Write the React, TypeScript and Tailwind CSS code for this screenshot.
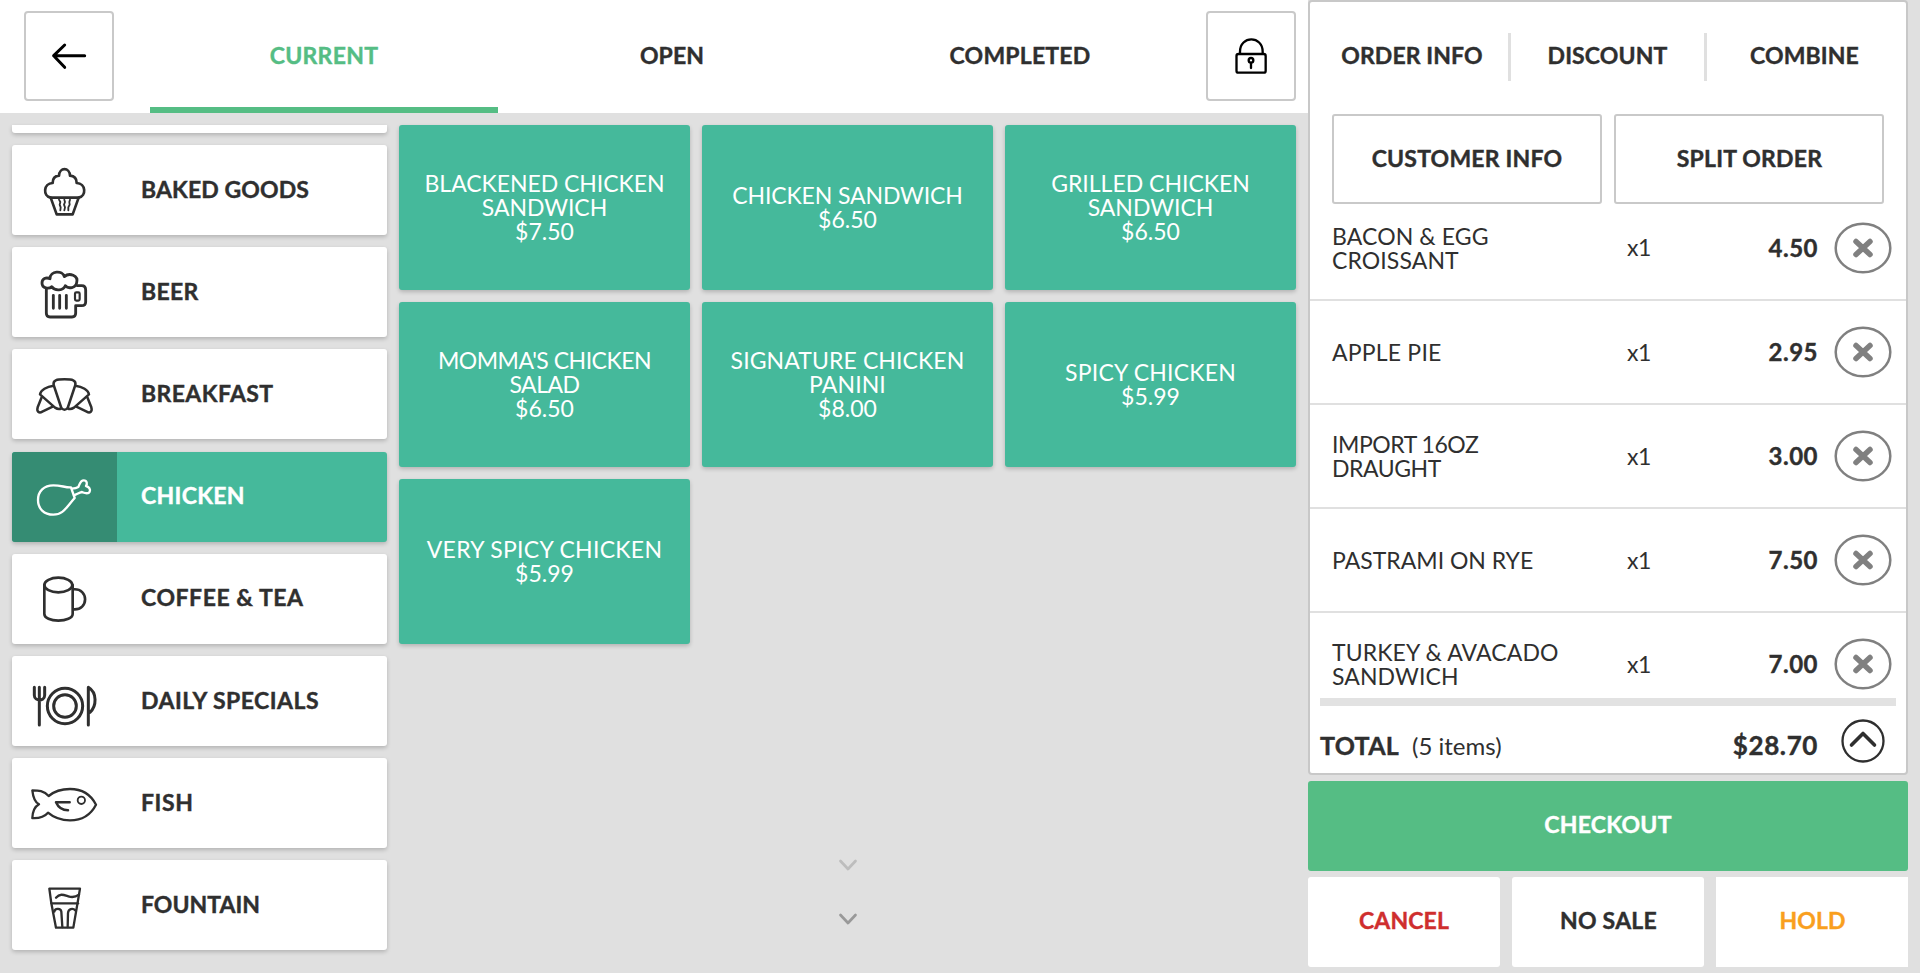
import type { ReactNode } from "react";

const BakedGoods = (
  <g strokeWidth="8">
    <path d="M152 203C128 198 130 160 158 159C158 146 165 138 177 137C178 111 209 111 210 137C222 138 230 146 230 159C258 160 260 198 236 203Z" />
    <path d="M152 203L170 253H218L236 203" />
    <path strokeWidth="5.500" d="M177 209l4 7-2 8 3 8-1 9M193 209l2 7-3 8 3 8-2 9M210 209l-2 7 1 8-4 8v9" />
  </g>
);

const Beer = (
  <g strokeWidth="8.500">
    <path d="M155 470C148 477 126 477 126 459C126 446 138 441 150 446C150 422 188 420 193 440C208 427 236 436 230 458C228 474 205 478 196 467C190 482 165 484 155 470Z" />
    <path d="M139 476V550Q139 561 150 561H216Q227 561 227 550V527H245Q257 527 257 515V480Q257 467 245 467H232" />
    <rect x="225" y="487" width="14" height="25" rx="4" strokeWidth="6.500" />
    <path strokeWidth="8.500" d="M160 496V535M179 496V535M199 496V535" />
  </g>
);

const Breakfast = (
  <g strokeWidth="7.500">
    <path d="M161 765C158 750 170 748 193.500 748C217 748 229 750 226 765L203 834Q193.500 844 184 834Z" />
    <path d="M161 767C140 770 122 780 120 793L165 833Q176 840 184 835M226 767C247 770 265 780 267 793L222 833Q211 840 203 835" />
    <path d="M125 802L113 832C109 846 118 850 127 845L158 830M262 802L274 832C278 846 269 850 260 845L229 830" />
  </g>
);

const Chicken = (
  <g strokeWidth="7">
    <path d="M213 140C195 141 185 134 160 134C132 134 114 152 114 178C114 204 132 222 160 222C190 222 197 202 224 172Z" />
    <path d="M216 144Q228 143 235 139C240 128 241 119 251 119C262 119 262 130 258 136C268 138 272 147 269 153C265 162 250 156 246 154C238 156 232 160 222 164" />
  </g>
);

const Coffee = (
  <g strokeWidth="8">
    <ellipse cx="175" cy="434" rx="42" ry="22" />
    <path d="M133 434V521C133 533 152 541 175 541C198 541 218 533 218 521V434" />
    <path d="M220 447C267 443 267 511 220 507" />
  </g>
);

const DailySpecials = (
  <g strokeWidth="9">
    <circle cx="195" cy="797" r="53" />
    <circle cx="195" cy="797" r="34" />
    <path d="M103 741V765C103 775 112 779 118 779C125 779 134 775 134 765V741M118 741V854" />
    <path d="M265 854V741C292 757 290 798 270 816" />
  </g>
);

const Fish = (
  <g strokeWidth="7">
    <path d="M146 168C165 152 188 147 210 147C245 147 272 163 288 194C272 225 245 241 210 241C188 241 165 236 144 218C132 232 115 235 97 234C98 215 104 200 117 193C104 186 99 170 97 151C115 151 132 152 146 168Z" />
    <path d="M209 187H168C175 203 188 211 204 211" strokeWidth="7.500" />
    <circle cx="244" cy="181" r="11" strokeWidth="5.500" />
  </g>
);

const Fountain = (
  <g strokeWidth="7">
    <path d="M148 447H240L220 564H168L154 491Z" />
    <path d="M155 491H234" />
    <path d="M168 474C180 460 192 466 205 470C217 474 230 470 237 465" />
    <path d="M163 516C164 506 182 504 184 516L187 562M226 512C218 504 205 508 204 520L203 562" />
  </g>
);

type Category = { name: string; view: string; icon: ReactNode; spacing: string; active?: boolean };

const categories: Category[] = [
  { name: "BAKED GOODS", view: "36 45 315 270", icon: BakedGoods, spacing: "tracking-[0.1px]" },
  { name: "BEER", view: "36 351 315 270", icon: Beer, spacing: "tracking-[0.3px]" },
  { name: "BREAKFAST", view: "36 657 315 270", icon: Breakfast, spacing: "tracking-[0.4px]" },
  { name: "CHICKEN", view: "36 34 315 270", icon: Chicken, spacing: "tracking-[0.3px]", active: true },
  { name: "COFFEE & TEA", view: "36 341 315 270", icon: Coffee, spacing: "tracking-[0.55px]" },
  { name: "DAILY SPECIALS", view: "36 647 315 270", icon: DailySpecials, spacing: "tracking-[0.48px]" },
  { name: "FISH", view: "36 54 315 270", icon: Fish, spacing: "tracking-[0.6px]" },
  { name: "FOUNTAIN", view: "36 361 315 270", icon: Fountain, spacing: "tracking-[0px]" },
];

const products = [
  { lines: ["BLACKENED CHICKEN", "SANDWICH"], price: "$7.50", spacing: "tracking-[-0.05px]" },
  { lines: ["CHICKEN SANDWICH"], price: "$6.50", spacing: "tracking-[-0.12px]" },
  { lines: ["GRILLED CHICKEN", "SANDWICH"], price: "$6.50", spacing: "tracking-[0px]" },
  { lines: ["MOMMA'S CHICKEN", "SALAD"], price: "$6.50", spacing: "tracking-[-0.5px]" },
  { lines: ["SIGNATURE CHICKEN", "PANINI"], price: "$8.00", spacing: "tracking-[0.1px]" },
  { lines: ["SPICY CHICKEN"], price: "$5.99", spacing: "tracking-[0.2px]" },
  { lines: ["VERY SPICY CHICKEN"], price: "$5.99", spacing: "tracking-[0.3px]" },
];

const items = [
  { lines: ["BACON & EGG", "CROISSANT"], price: "4.50", spacing: "tracking-[0.1px]" },
  { lines: ["APPLE PIE"], price: "2.95", spacing: "tracking-[0.2px]" },
  { lines: ["IMPORT 16OZ", "DRAUGHT"], price: "3.00", spacing: "tracking-[-0.45px]" },
  { lines: ["PASTRAMI ON RYE"], price: "7.50", spacing: "tracking-[0px]" },
  { lines: ["TURKEY & AVACADO", "SANDWICH"], price: "7.00", spacing: "tracking-[0.1px]" },
];

function Chevron({ className }: { className: string }) {
  return (
    <svg viewBox="0 0 20 12" className={`h-3 w-5 fill-none ${className}`} strokeWidth="2.7" strokeLinecap="round" strokeLinejoin="round">
      <path d="M2.500 2L10 10L17.500 2" />
    </svg>
  );
}

function Header() {
  return (
    <header className="flex h-[113px] shrink-0 bg-white pl-6 pr-3">
      <button className="mt-[11px] size-[90px] shrink-0 rounded border-2 border-[#c9c9c9]">
        <svg viewBox="18 21 258 258" className="size-full fill-none stroke-black" strokeWidth="9" strokeLinecap="round" strokeLinejoin="round">
          <path d="M194 149H101M134 117L101 149L134 184" />
        </svg>
      </button>
      <nav className="ml-9 grid w-[1044px] grid-cols-3">
        <button className="border-b-6 border-[#55bd84] pt-1 tracking-[0.3px] text-[#55bd84]">CURRENT</button>
        <button className="border-b-6 border-transparent pt-1">OPEN</button>
        <button className="border-b-6 border-transparent pt-1 tracking-[0.2px]">COMPLETED</button>
      </nav>
      <button className="ml-3 mt-[11px] size-[90px] shrink-0 rounded border-2 border-[#c9c9c9]">
        <svg viewBox="12 21 258 258" className="size-full fill-none stroke-black" strokeWidth="7" strokeLinecap="round">
          <rect x="97.500" y="144" width="87.500" height="56" rx="6" />
          <path d="M108 143V137C108 88 176 88 176 137V143" />
          <circle cx="141" cy="163" r="7" />
          <path d="M141 171V186" />
        </svg>
      </button>
    </header>
  );
}

function Sidebar() {
  return (
    <aside className="flex w-[375px] shrink-0 flex-col gap-[12.15px]">
      <div className="h-2 shrink-0 rounded-b-[3px] bg-white shadow-[0_2px_4px_rgba(0,0,0,0.2)]" />
      {categories.map((c) => (
        <button
          key={c.name}
          className={`flex h-[90px] shrink-0 items-center overflow-hidden rounded-[3px] text-left shadow-[0_2px_4px_rgba(0,0,0,0.2)] ${
            c.active ? "bg-[#45b99b] text-white" : "bg-white"
          }`}
        >
          <span className={`h-full w-[105px] ${c.active ? "bg-[#358c73]" : ""}`}>
            <svg
              viewBox={c.view}
              className={`size-full fill-none ${c.active ? "stroke-white" : "stroke-[#2f2f2f]"}`}
              strokeLinecap="round"
              strokeLinejoin="round"
            >
              {c.icon}
            </svg>
          </span>
          <span className={`pb-0.5 pl-6 ${c.spacing}`}>{c.name}</span>
        </button>
      ))}
    </aside>
  );
}

function Products() {
  return (
    <section className="flex flex-1 flex-col items-center justify-between">
      <div className="grid w-full grid-cols-3 gap-x-3 gap-y-[12.2px]">
        {products.map((p) => (
          <button
            key={p.lines[0]}
            className={`flex h-[165px] flex-col items-center justify-center rounded-[3px] bg-[#45b99b] pb-0.5 font-normal leading-6 text-white shadow-[0_2px_4px_rgba(0,0,0,0.2)] [-webkit-text-stroke:0] ${p.spacing}`}
          >
            {p.lines.map((l) => (
              <span key={l}>{l}</span>
            ))}
            <span className="tracking-[0px]">{p.price}</span>
          </button>
        ))}
      </div>
      <div className="flex flex-col gap-[42px] pb-12 pl-px">
        <Chevron className="stroke-[#bdbdbd]" />
        <Chevron className="stroke-[#999999]" />
      </div>
    </section>
  );
}

function OrderRow({ lines, price, spacing }: { lines: string[]; price: string; spacing: string }) {
  return (
    <li className="flex h-[104.2px] shrink-0 items-center border-b-2 border-[#e0e0e0] pl-[22px]">
      <div className={`w-[295px] font-normal leading-6 [-webkit-text-stroke:0] ${spacing}`}>
        {lines.map((l) => (
          <div key={l}>{l}</div>
        ))}
      </div>
      <div className="w-[70px] font-normal tracking-[-0.4px] [-webkit-text-stroke:0]">x1</div>
      <div className="w-[121px] text-right text-[24px] tracking-[0.5px]">{price}</div>
      <svg viewBox="0 0 58 52" className="ml-[16px] h-[52px] w-[58px] fill-none stroke-[#808080]" strokeLinecap="round">
        <ellipse cx="29" cy="26" rx="27.300" ry="24.300" strokeWidth="2.500" />
        <path d="M22 19.500L36 32.500M36 19.500L22 32.500" strokeWidth="5.500" />
      </svg>
    </li>
  );
}

function OrderPanel() {
  return (
    <section className="flex w-[600px] shrink-0 flex-col">
      <div className="flex h-[775px] flex-col rounded border-2 border-[#c8c8c8] bg-white">
        <nav className="mt-[31px] grid h-12 shrink-0 grid-cols-[201px_196px_1fr]">
          <button className="border-r-3 border-[#e0e0e0] pl-1.5 pb-1">ORDER INFO</button>
          <button className="border-r-3 border-[#e0e0e0] pb-1">DISCOUNT</button>
          <button className="pr-1 pb-1">COMBINE</button>
        </nav>
        <div className="mt-[33px] grid shrink-0 grid-cols-2 gap-3 px-[22px]">
          <button className="h-[90px] rounded-[3px] border-2 border-[#c9c9c9] pb-0.5 tracking-[0.2px]">CUSTOMER INFO</button>
          <button className="h-[90px] rounded-[3px] border-2 border-[#c9c9c9] pb-0.5 pl-px tracking-[0.2px]">SPLIT ORDER</button>
        </div>
        <ul className="h-[494px] shrink-0 overflow-hidden">
          <div className="-mt-[7.5px] flex flex-col">
            {items.map((i) => (
              <OrderRow key={i.lines[0]} {...i} />
            ))}
          </div>
        </ul>
        <div className="mx-2.5 h-2 shrink-0 bg-[#e2e2e2]" />
        <div className="flex flex-1 pl-[10px]">
          <span className="pt-[23px] text-[25px] leading-8 tracking-[0.3px]">TOTAL</span>
          <span className="w-[200px] pl-[13px] pt-[24px] text-[24px] font-normal leading-8 tracking-[0px] [-webkit-text-stroke:0]">(5 items)</span>
          <span className="flex-1 pt-[23px] text-right text-[26px] leading-8 tracking-[0.6px]">$28.70</span>
          <svg viewBox="0 0 44 44" className="ml-[23px] mr-[21px] mt-[13px] size-11 fill-none stroke-[#2f2f2f]" strokeLinecap="round" strokeLinejoin="round">
            <circle cx="22" cy="22" r="20.500" strokeWidth="2.300" />
            <path d="M10.500 26L22 14.500L33.500 26" strokeWidth="3.600" />
          </svg>
        </div>
      </div>
      <button className="mt-1.5 h-[90px] shrink-0 rounded-[3px] bg-[#55bd84] pb-[3px] tracking-[0.25px] text-white">CHECKOUT</button>
      <div className="mt-1.5 grid grid-cols-3 gap-3">
        <button className="h-[90px] rounded-[3px] bg-white pb-[3px] text-[#cf2e2e]">CANCEL</button>
        <button className="h-[90px] rounded-[3px] bg-white pb-[3px] pl-px tracking-[0.25px]">NO SALE</button>
        <button className="h-[90px] bg-white pb-[3px] pl-px text-[#f99f1e]">HOLD</button>
      </div>
    </section>
  );
}

export default function App() {
  return (
    <div className="flex h-[973px] w-[1920px] overflow-hidden bg-[#e0e0e0] font-['Lato',sans-serif] text-[23px] font-bold tracking-[0.1px] text-[#2f2f2f] [-webkit-text-stroke:0.4px]">
      <div className="flex w-[1308px] shrink-0 flex-col">
        <Header />
        <main className="flex flex-1 gap-3 overflow-hidden pl-3 pr-3 pt-3">
          <Sidebar />
          <Products />
        </main>
      </div>
      <OrderPanel />
    </div>
  );
}
